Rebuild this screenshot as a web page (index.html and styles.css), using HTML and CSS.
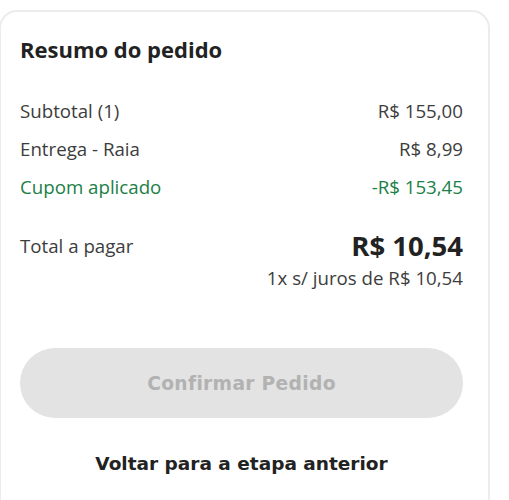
FILE: index.html
```html
<!DOCTYPE html>
<html lang="pt-BR">
<head>
  <meta charset="UTF-8">
  <meta name="viewport" content="width=device-width, initial-scale=1.0">
  <title>Resumo do pedido</title>
  <link rel="stylesheet" href="styles.css">
</head>
<body>
  <section class="summary">
    <h2>Resumo do pedido</h2>

    <div class="lines">
      <div class="line">
        <span>Subtotal (1)</span>
        <span>R$ 155,00</span>
      </div>
      <div class="line">
        <span>Entrega - Raia</span>
        <span>R$ 8,99</span>
      </div>
      <div class="line discount">
        <span>Cupom aplicado</span>
        <span>-R$ 153,45</span>
      </div>
    </div>

    <div class="total">
      <span class="total-label">Total a pagar</span>
      <div class="total-value">
        <strong>R$ 10,54</strong>
        <span>1x s/ juros de R$ 10,54</span>
      </div>
    </div>

    <button class="confirm" disabled>Confirmar Pedido</button>
    <a class="back" href="#">Voltar para a etapa anterior</a>
  </section>
</body>
</html>
```

FILE: styles.css
```css
body {
  margin: 0;
  font-family: "Open Sans", Arial, sans-serif;
  color: #3d3d3d;
  background: #fff;
  overflow: hidden;
}

.summary {
  box-sizing: border-box;
  width: 491px;
  margin-top: 10px;
  margin-left: -1px;
  padding: 23px 25px 0 19px;
  height: 490px;
  border: 2px solid #ececec;
  border-bottom: none;
  border-radius: 18px 18px 0 0;
}

.summary h2 {
  margin: 0;
  font-size: 22px;
  line-height: 28px;
  font-weight: 700;
  color: #222;
}

.lines {
  margin-top: 36px;
  display: flex;
  flex-direction: column;
  gap: 14px;
}

.line {
  display: flex;
  justify-content: space-between;
  font-size: 18.7px;
  line-height: 24px;
}

.line.discount {
  color: #1b8046;
}

.total {
  margin-top: 32px;
  display: flex;
  justify-content: space-between;
  align-items: flex-start;
  font-size: 18.7px;
}

.total-label {
  line-height: 30px;
}

.total-value {
  display: flex;
  flex-direction: column;
  align-items: flex-end;
}

.total-value strong {
  font-size: 27.5px;
  line-height: 30px;
  color: #222;
}

.total-value span {
  line-height: 34px;
}

.confirm {
  display: block;
  width: 100%;
  height: 70px;
  margin-top: 53px;
  border: none;
  border-radius: 35px;
  background: #e3e3e3;
  color: #b2b2b2;
  font-family: "DejaVu Sans", Arial, sans-serif;
  font-size: 18.7px;
  font-weight: 700;
  letter-spacing: 0.3px;
}

.back {
  display: block;
  margin-top: 35px;
  text-align: center;
  color: #222;
  text-decoration: none;
  font-family: "DejaVu Sans", Arial, sans-serif;
  font-size: 18.5px;
  font-weight: 700;
}
```
